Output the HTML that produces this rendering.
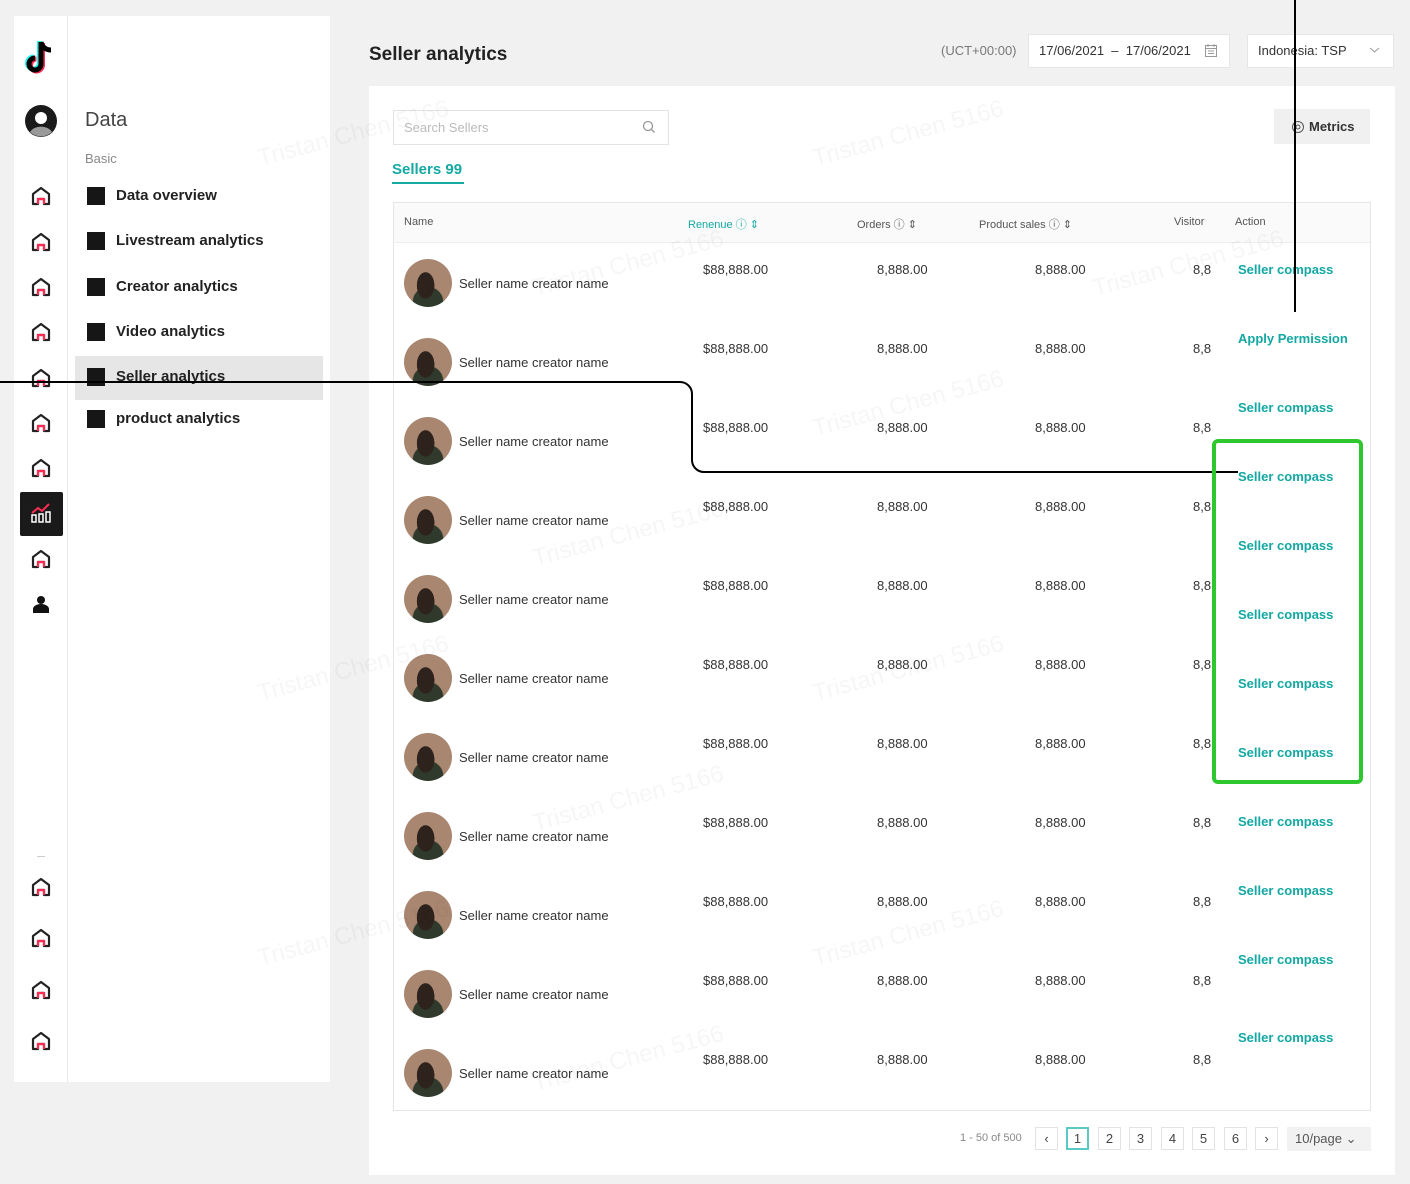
<!DOCTYPE html>
<html><head><meta charset="utf-8"><style>
*{margin:0;padding:0;box-sizing:border-box}
body{width:1410px;height:1184px;background:#f1f1f1;font-family:"Liberation Sans",sans-serif;position:relative;overflow:hidden;color:#222}
.a{position:absolute;white-space:nowrap}
.side{left:14px;top:16px;width:316px;height:1066px;background:#fff}
.rail{left:67px;top:16px;width:1px;height:1066px;background:#e8e8e8}
.nav{font-size:15px;color:#222;font-weight:bold}
.sq{width:18px;height:18px;background:#161616}
.card{left:369px;top:86px;width:1026px;height:1089px;background:#fff}
.tbl{left:393px;top:202px;width:978px;height:909px;border:1px solid #e6e6e6;background:#fff}
.th{font-size:11px;color:#555}
.td{font-size:13px;color:#333}
.av{width:48px;height:48px;border-radius:50%;background:radial-gradient(ellipse 30% 45% at 45% 55%,#2e221c 0 60%,transparent 62%),radial-gradient(circle at 50% 90%,#2f3a2c 0 30%,transparent 32%),#a98670;}
.lnk{font-size:13px;color:#13a8a3;font-weight:bold}
.pg{width:23px;height:23px;border:1px solid #e3e3e3;font-size:13px;color:#444;text-align:center;line-height:21px;background:#fff}
.wm{font-size:24px;color:rgba(0,0,0,0.035);transform:rotate(-15deg)}
</style></head><body>
<div class="a side"></div><div class="a rail"></div>
<svg class="a" style="left:24px;top:38px" width="34" height="40" viewBox="0 0 34 40"><path d="M17 4v22a6 6 0 1 1-6-6" fill="none" stroke="#25f4ee" stroke-width="5" transform="translate(-1.5,-1)"/><path d="M17 4v22a6 6 0 1 1-6-6" fill="none" stroke="#fe2c55" stroke-width="5" transform="translate(1.5,1)"/><path d="M17 4v22a6 6 0 1 1-6-6M17 4c1 5 5 8 10 8" fill="none" stroke="#000" stroke-width="5"/></svg>
<svg class="a" style="left:25px;top:105px" width="32" height="32" viewBox="0 0 32 32"><circle cx="16" cy="16" r="16" fill="#1a1a1a"/><circle cx="16" cy="13" r="6" fill="#fff"/><path d="M5 27a12 9 0 0 1 22 0a16 16 0 0 1-22 0z" fill="#999"/></svg>
<div class="a" style="left:85px;top:109px;font-size:20px;color:#444">Data</div>
<div class="a" style="left:85px;top:151px;font-size:13px;color:#888">Basic</div>
<div class="a" style="left:75px;top:356px;width:248px;height:44px;background:#e6e6e6"></div>
<div class="a sq" style="left:87px;top:187px"></div><div class="a nav" style="left:116px;top:187px">Data overview</div>
<div class="a sq" style="left:87px;top:232px"></div><div class="a nav" style="left:116px;top:232px">Livestream analytics</div>
<div class="a sq" style="left:87px;top:278px"></div><div class="a nav" style="left:116px;top:278px">Creator analytics</div>
<div class="a sq" style="left:87px;top:323px"></div><div class="a nav" style="left:116px;top:323px">Video analytics</div>
<div class="a sq" style="left:87px;top:368px"></div><div class="a nav" style="left:116px;top:368px">Seller analytics</div>
<div class="a sq" style="left:87px;top:410px"></div><div class="a nav" style="left:116px;top:410px">product analytics</div>
<svg width="0" height="0" style="position:absolute"><defs><g id="h"><path d="M2 18V8l8-6 8 6v10H13v-5H7v5z" fill="none" stroke="#222" stroke-width="2.2" stroke-linejoin="round"/><path d="M7 18v-5h6v5" fill="none" stroke="#fe2c55" stroke-width="2.2"/></g></defs></svg>
<svg class="a" style="left:31px;top:186px" width="20" height="20"><use href="#h"/></svg>
<svg class="a" style="left:31px;top:232px" width="20" height="20"><use href="#h"/></svg>
<svg class="a" style="left:31px;top:277px" width="20" height="20"><use href="#h"/></svg>
<svg class="a" style="left:31px;top:322px" width="20" height="20"><use href="#h"/></svg>
<svg class="a" style="left:31px;top:368px" width="20" height="20"><use href="#h"/></svg>
<svg class="a" style="left:31px;top:413px" width="20" height="20"><use href="#h"/></svg>
<svg class="a" style="left:31px;top:458px" width="20" height="20"><use href="#h"/></svg>
<div class="a" style="left:20px;top:492px;width:43px;height:44px;background:#1a1a1a;border-radius:2px"></div>
<svg class="a" style="left:29px;top:502px" width="24" height="22"><path d="M3 11l6-5 4 3 7-7" fill="none" stroke="#fe2c55" stroke-width="2"/><rect x="3" y="13" width="4" height="7" fill="none" stroke="#fff" stroke-width="1.5"/><rect x="10" y="12" width="4" height="8" fill="none" stroke="#fff" stroke-width="1.5"/><rect x="17" y="10" width="4" height="10" fill="none" stroke="#fff" stroke-width="1.5"/></svg>
<svg class="a" style="left:31px;top:549px" width="20" height="20"><use href="#h"/></svg>
<svg class="a" style="left:32px;top:595px" width="20" height="20"><circle cx="9" cy="5" r="4" fill="#111"/><path d="M1 18v-4a8 5 0 0 1 16 0v4z" fill="#111"/></svg>
<div class="a" style="left:37px;top:856px;width:8px;height:1px;background:#ccc"></div>
<svg class="a" style="left:31px;top:877px" width="20" height="20"><use href="#h"/></svg>
<svg class="a" style="left:31px;top:928px" width="20" height="20"><use href="#h"/></svg>
<svg class="a" style="left:31px;top:980px" width="20" height="20"><use href="#h"/></svg>
<svg class="a" style="left:31px;top:1031px" width="20" height="20"><use href="#h"/></svg>

<div class="a" style="left:369px;top:44px;font-size:19px;font-weight:bold;color:#222">Seller analytics</div>
<div class="a" style="left:941px;top:43px;font-size:13px;color:#777">(UCT+00:00)</div>
<div class="a" style="left:1028px;top:34px;width:202px;height:34px;background:#fff;border:1px solid #e6e6e6"></div>
<div class="a" style="left:1039px;top:43px;font-size:13px;color:#333">17/06/2021 &nbsp;–&nbsp; 17/06/2021</div>
<svg class="a" style="left:1204px;top:43px" width="14" height="15"><rect x="1.5" y="2.5" width="11" height="11" fill="none" stroke="#999"/><path d="M1.5 5.5h11M4 8h6M4 10.5h6M4 1v3M10 1v3" stroke="#999"/></svg>
<div class="a" style="left:1247px;top:34px;width:147px;height:34px;background:#fff;border:1px solid #e6e6e6"></div>
<div class="a" style="left:1258px;top:43px;font-size:13px;color:#333">Indonesia: TSP</div>
<svg class="a" style="left:1369px;top:47px" width="11" height="7"><path d="M1 1l4.5 4 4.5-4" fill="none" stroke="#999"/></svg>

<div class="a card"></div>
<div class="a" style="left:393px;top:110px;width:276px;height:35px;border:1px solid #e3e3e3;background:#fff"></div>
<div class="a" style="left:404px;top:120px;font-size:13px;color:#bbb">Search Sellers</div>
<svg class="a" style="left:642px;top:120px" width="14" height="14"><circle cx="6" cy="6" r="4.5" fill="none" stroke="#999" stroke-width="1.3"/><path d="M9.5 9.5l3 3" stroke="#999" stroke-width="1.3"/></svg>
<div class="a" style="left:1274px;top:109px;width:96px;height:35px;background:#f0f0f0"></div>
<svg class="a" style="left:1291px;top:120px" width="14" height="14"><circle cx="7" cy="7" r="5.5" fill="none" stroke="#555"/><circle cx="7" cy="7" r="2" fill="none" stroke="#555"/></svg>
<div class="a" style="left:1309px;top:119px;font-size:13px;font-weight:bold;color:#333">Metrics</div>
<div class="a" style="left:392px;top:161px;font-size:15px;font-weight:bold;color:#14a9a3">Sellers 99</div>
<div class="a" style="left:392px;top:182px;width:72px;height:2px;background:#14a9a3"></div>

<div class="a tbl"></div>
<div class="a" style="left:394px;top:203px;width:976px;height:40px;background:#fafafa;border-bottom:1px solid #eee"></div>
<div class="a th" style="left:404px;top:216px">Name</div>
<div class="a th" style="left:688px;top:216px;color:#14a9a3">Renenue ⓘ ⇕</div>
<div class="a th" style="left:857px;top:216px">Orders ⓘ ⇕</div>
<div class="a th" style="left:979px;top:216px">Product sales ⓘ ⇕</div>
<div class="a th" style="left:1174px;top:216px">Visitor</div>
<div class="a th" style="left:1235px;top:216px">Action</div>

<div class="a av" style="left:404px;top:259px"></div><div class="a td" style="left:459px;top:276px">Seller name creator name</div><div class="a td" style="left:703px;top:262px">$88,888.00</div><div class="a td" style="left:877px;top:262px">8,888.00</div><div class="a td" style="left:1035px;top:262px">8,888.00</div><div class="a td" style="left:1193px;top:262px">8,8</div>
<div class="a av" style="left:404px;top:338px"></div><div class="a td" style="left:459px;top:355px">Seller name creator name</div><div class="a td" style="left:703px;top:341px">$88,888.00</div><div class="a td" style="left:877px;top:341px">8,888.00</div><div class="a td" style="left:1035px;top:341px">8,888.00</div><div class="a td" style="left:1193px;top:341px">8,8</div>
<div class="a av" style="left:404px;top:417px"></div><div class="a td" style="left:459px;top:434px">Seller name creator name</div><div class="a td" style="left:703px;top:420px">$88,888.00</div><div class="a td" style="left:877px;top:420px">8,888.00</div><div class="a td" style="left:1035px;top:420px">8,888.00</div><div class="a td" style="left:1193px;top:420px">8,8</div>
<div class="a av" style="left:404px;top:496px"></div><div class="a td" style="left:459px;top:513px">Seller name creator name</div><div class="a td" style="left:703px;top:499px">$88,888.00</div><div class="a td" style="left:877px;top:499px">8,888.00</div><div class="a td" style="left:1035px;top:499px">8,888.00</div><div class="a td" style="left:1193px;top:499px">8,8</div>
<div class="a av" style="left:404px;top:575px"></div><div class="a td" style="left:459px;top:592px">Seller name creator name</div><div class="a td" style="left:703px;top:578px">$88,888.00</div><div class="a td" style="left:877px;top:578px">8,888.00</div><div class="a td" style="left:1035px;top:578px">8,888.00</div><div class="a td" style="left:1193px;top:578px">8,8</div>
<div class="a av" style="left:404px;top:654px"></div><div class="a td" style="left:459px;top:671px">Seller name creator name</div><div class="a td" style="left:703px;top:657px">$88,888.00</div><div class="a td" style="left:877px;top:657px">8,888.00</div><div class="a td" style="left:1035px;top:657px">8,888.00</div><div class="a td" style="left:1193px;top:657px">8,8</div>
<div class="a av" style="left:404px;top:733px"></div><div class="a td" style="left:459px;top:750px">Seller name creator name</div><div class="a td" style="left:703px;top:736px">$88,888.00</div><div class="a td" style="left:877px;top:736px">8,888.00</div><div class="a td" style="left:1035px;top:736px">8,888.00</div><div class="a td" style="left:1193px;top:736px">8,8</div>
<div class="a av" style="left:404px;top:812px"></div><div class="a td" style="left:459px;top:829px">Seller name creator name</div><div class="a td" style="left:703px;top:815px">$88,888.00</div><div class="a td" style="left:877px;top:815px">8,888.00</div><div class="a td" style="left:1035px;top:815px">8,888.00</div><div class="a td" style="left:1193px;top:815px">8,8</div>
<div class="a av" style="left:404px;top:891px"></div><div class="a td" style="left:459px;top:908px">Seller name creator name</div><div class="a td" style="left:703px;top:894px">$88,888.00</div><div class="a td" style="left:877px;top:894px">8,888.00</div><div class="a td" style="left:1035px;top:894px">8,888.00</div><div class="a td" style="left:1193px;top:894px">8,8</div>
<div class="a av" style="left:404px;top:970px"></div><div class="a td" style="left:459px;top:987px">Seller name creator name</div><div class="a td" style="left:703px;top:973px">$88,888.00</div><div class="a td" style="left:877px;top:973px">8,888.00</div><div class="a td" style="left:1035px;top:973px">8,888.00</div><div class="a td" style="left:1193px;top:973px">8,8</div>
<div class="a av" style="left:404px;top:1049px"></div><div class="a td" style="left:459px;top:1066px">Seller name creator name</div><div class="a td" style="left:703px;top:1052px">$88,888.00</div><div class="a td" style="left:877px;top:1052px">8,888.00</div><div class="a td" style="left:1035px;top:1052px">8,888.00</div><div class="a td" style="left:1193px;top:1052px">8,8</div>

<div class="a lnk" style="left:1238px;top:262px">Seller compass</div>
<div class="a lnk" style="left:1238px;top:331px">Apply Permission</div>
<div class="a lnk" style="left:1238px;top:400px">Seller compass</div>
<div class="a lnk" style="left:1238px;top:469px">Seller compass</div>
<div class="a lnk" style="left:1238px;top:538px">Seller compass</div>
<div class="a lnk" style="left:1238px;top:607px">Seller compass</div>
<div class="a lnk" style="left:1238px;top:676px">Seller compass</div>
<div class="a lnk" style="left:1238px;top:745px">Seller compass</div>
<div class="a lnk" style="left:1238px;top:814px">Seller compass</div>
<div class="a lnk" style="left:1238px;top:883px">Seller compass</div>
<div class="a lnk" style="left:1238px;top:952px">Seller compass</div>
<div class="a lnk" style="left:1238px;top:1030px">Seller compass</div>

<div class="a" style="left:960px;top:1132px;font-size:11px;color:#888">1 - 50 of 500</div>
<div class="a pg" style="left:1035px;top:1127px">‹</div>
<div class="a pg" style="left:1066px;top:1127px;border:2px solid #5ac8c4;line-height:19px">1</div>
<div class="a pg" style="left:1098px;top:1127px">2</div>
<div class="a pg" style="left:1129px;top:1127px">3</div>
<div class="a pg" style="left:1161px;top:1127px">4</div>
<div class="a pg" style="left:1192px;top:1127px">5</div>
<div class="a pg" style="left:1224px;top:1127px">6</div>
<div class="a pg" style="left:1255px;top:1127px">›</div>
<div class="a" style="left:1287px;top:1127px;width:84px;height:24px;background:#f2f2f2;font-size:13px;color:#555;padding:4px 8px">10/page ⌄</div>

<div class="a wm" style="left:255px;top:120px">Tristan Chen 5166</div>
<div class="a wm" style="left:810px;top:120px">Tristan Chen 5166</div>
<div class="a wm" style="left:530px;top:250px">Tristan Chen 5166</div>
<div class="a wm" style="left:1090px;top:250px">Tristan Chen 5166</div>
<div class="a wm" style="left:810px;top:390px">Tristan Chen 5166</div>
<div class="a wm" style="left:530px;top:520px">Tristan Chen 5166</div>
<div class="a wm" style="left:255px;top:655px">Tristan Chen 5166</div>
<div class="a wm" style="left:810px;top:655px">Tristan Chen 5166</div>
<div class="a wm" style="left:530px;top:785px">Tristan Chen 5166</div>
<div class="a wm" style="left:255px;top:920px">Tristan Chen 5166</div>
<div class="a wm" style="left:810px;top:920px">Tristan Chen 5166</div>
<div class="a wm" style="left:530px;top:1045px">Tristan Chen 5166</div>

<svg class="a" style="left:0;top:0" width="1410" height="1184"><path d="M1295 0V312" stroke="#000" stroke-width="2" fill="none"/><path d="M0 382H680a12 12 0 0 1 12 12V460a12 12 0 0 0 12 12H1238" stroke="#000" stroke-width="2" fill="none"/><rect x="1214" y="441" width="147" height="341" rx="4" fill="none" stroke="#2ec72e" stroke-width="4"/></svg>
</body></html>
